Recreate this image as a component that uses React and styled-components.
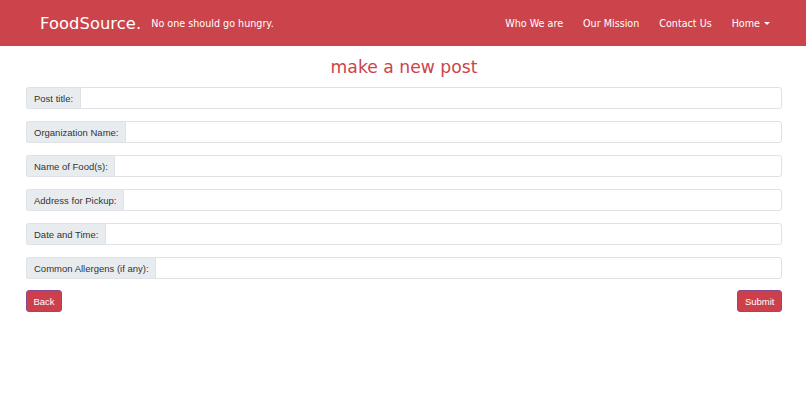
import React from 'react'
import styled, { createGlobalStyle } from 'styled-components'

const GlobalStyle = createGlobalStyle`
  * { box-sizing: border-box; }
  body {
    margin: 0;
    background: #fff;
    font-family: "Liberation Sans", Arial, sans-serif;
  }
`

const fields = [
  'Post title:',
  'Organization Name:',
  'Name of Food(s):',
  'Address for Pickup:',
  'Date and Time:',
  'Common Allergens (if any):',
]

function App() {
  return (
    <>
      <GlobalStyle />
      <Navbar>
        <Brand>FoodSource.</Brand>
        <Tagline>No one should go hungry.</Tagline>
        <NavLinks>
          <NavLink href="#">Who We are</NavLink>
          <NavLink href="#">Our Mission</NavLink>
          <NavLink href="#">Contact Us</NavLink>
          <NavLink href="#">
            Home <Caret />
          </NavLink>
        </NavLinks>
      </Navbar>
      <Main>
        <Title>make a new post</Title>
        <Form>
          {fields.map((f) => (
            <InputGroup key={f}>
              <Label>{f}</Label>
              <Input type="text" />
            </InputGroup>
          ))}
          <Actions>
            <Button type="button">Back</Button>
            <Button type="button">Submit</Button>
          </Actions>
        </Form>
      </Main>
    </>
  )
}

export default App

const Navbar = styled.nav`
  height: 46px;
  background: #cb444b;
  display: flex;
  align-items: center;
  padding: 0 36px 0 40px;
  font-family: "DejaVu Sans", "Open Sans", sans-serif;
  color: #fff;
`

const Brand = styled.span`
  font-size: 16.3px;
  letter-spacing: 0.1px;
  margin-right: 10px;
`

const Tagline = styled.span`
  font-size: 9.6px;
  padding-top: 1px;
`

const NavLinks = styled.div`
  margin-left: auto;
  display: flex;
  align-items: center;
  gap: 20px;
`

const NavLink = styled.a`
  color: #fff;
  text-decoration: none;
  font-size: 9.6px;
  display: flex;
  align-items: center;
`

const Caret = styled.span`
  display: inline-block;
  margin-left: 4px;
  border-top: 3.5px solid #fff;
  border-left: 3.5px solid transparent;
  border-right: 3.5px solid transparent;
`

const Main = styled.main`
  padding: 0 24px 0 26px;
`

const Title = styled.h1`
  margin: 10px 0 9px;
  text-align: center;
  color: #cb444b;
  font-family: "DejaVu Sans", "Open Sans", sans-serif;
  font-weight: 400;
  font-size: 17.2px;
  line-height: 22px;
`

const Form = styled.form`
  display: flex;
  flex-direction: column;
  gap: 12px;
`

const InputGroup = styled.div`
  display: flex;
  height: 22px;
`

const Label = styled.span`
  background: #e9ecef;
  border: 1px solid #dee2e6;
  border-right: none;
  border-radius: 3px 0 0 3px;
  padding: 0 6.5px 0 7px;
  display: flex;
  align-items: center;
  font-size: 9.5px;
  color: #333;
  white-space: nowrap;
`

const Input = styled.input`
  flex: 1;
  border: 1px solid #dee2e6;
  border-radius: 0 3px 3px 0;
  background: #fff;
  outline: none;
`

const Actions = styled.div`
  display: flex;
  justify-content: space-between;
  margin-top: -1px;
`

const Button = styled.button`
  height: 22px;
  padding: 0 6.5px;
  background: #cc3f4b;
  color: #fff;
  border: 1px solid #8a4a90;
  border-radius: 3px;
  font-family: "Liberation Sans", Arial, sans-serif;
  font-size: 9.5px;
`
